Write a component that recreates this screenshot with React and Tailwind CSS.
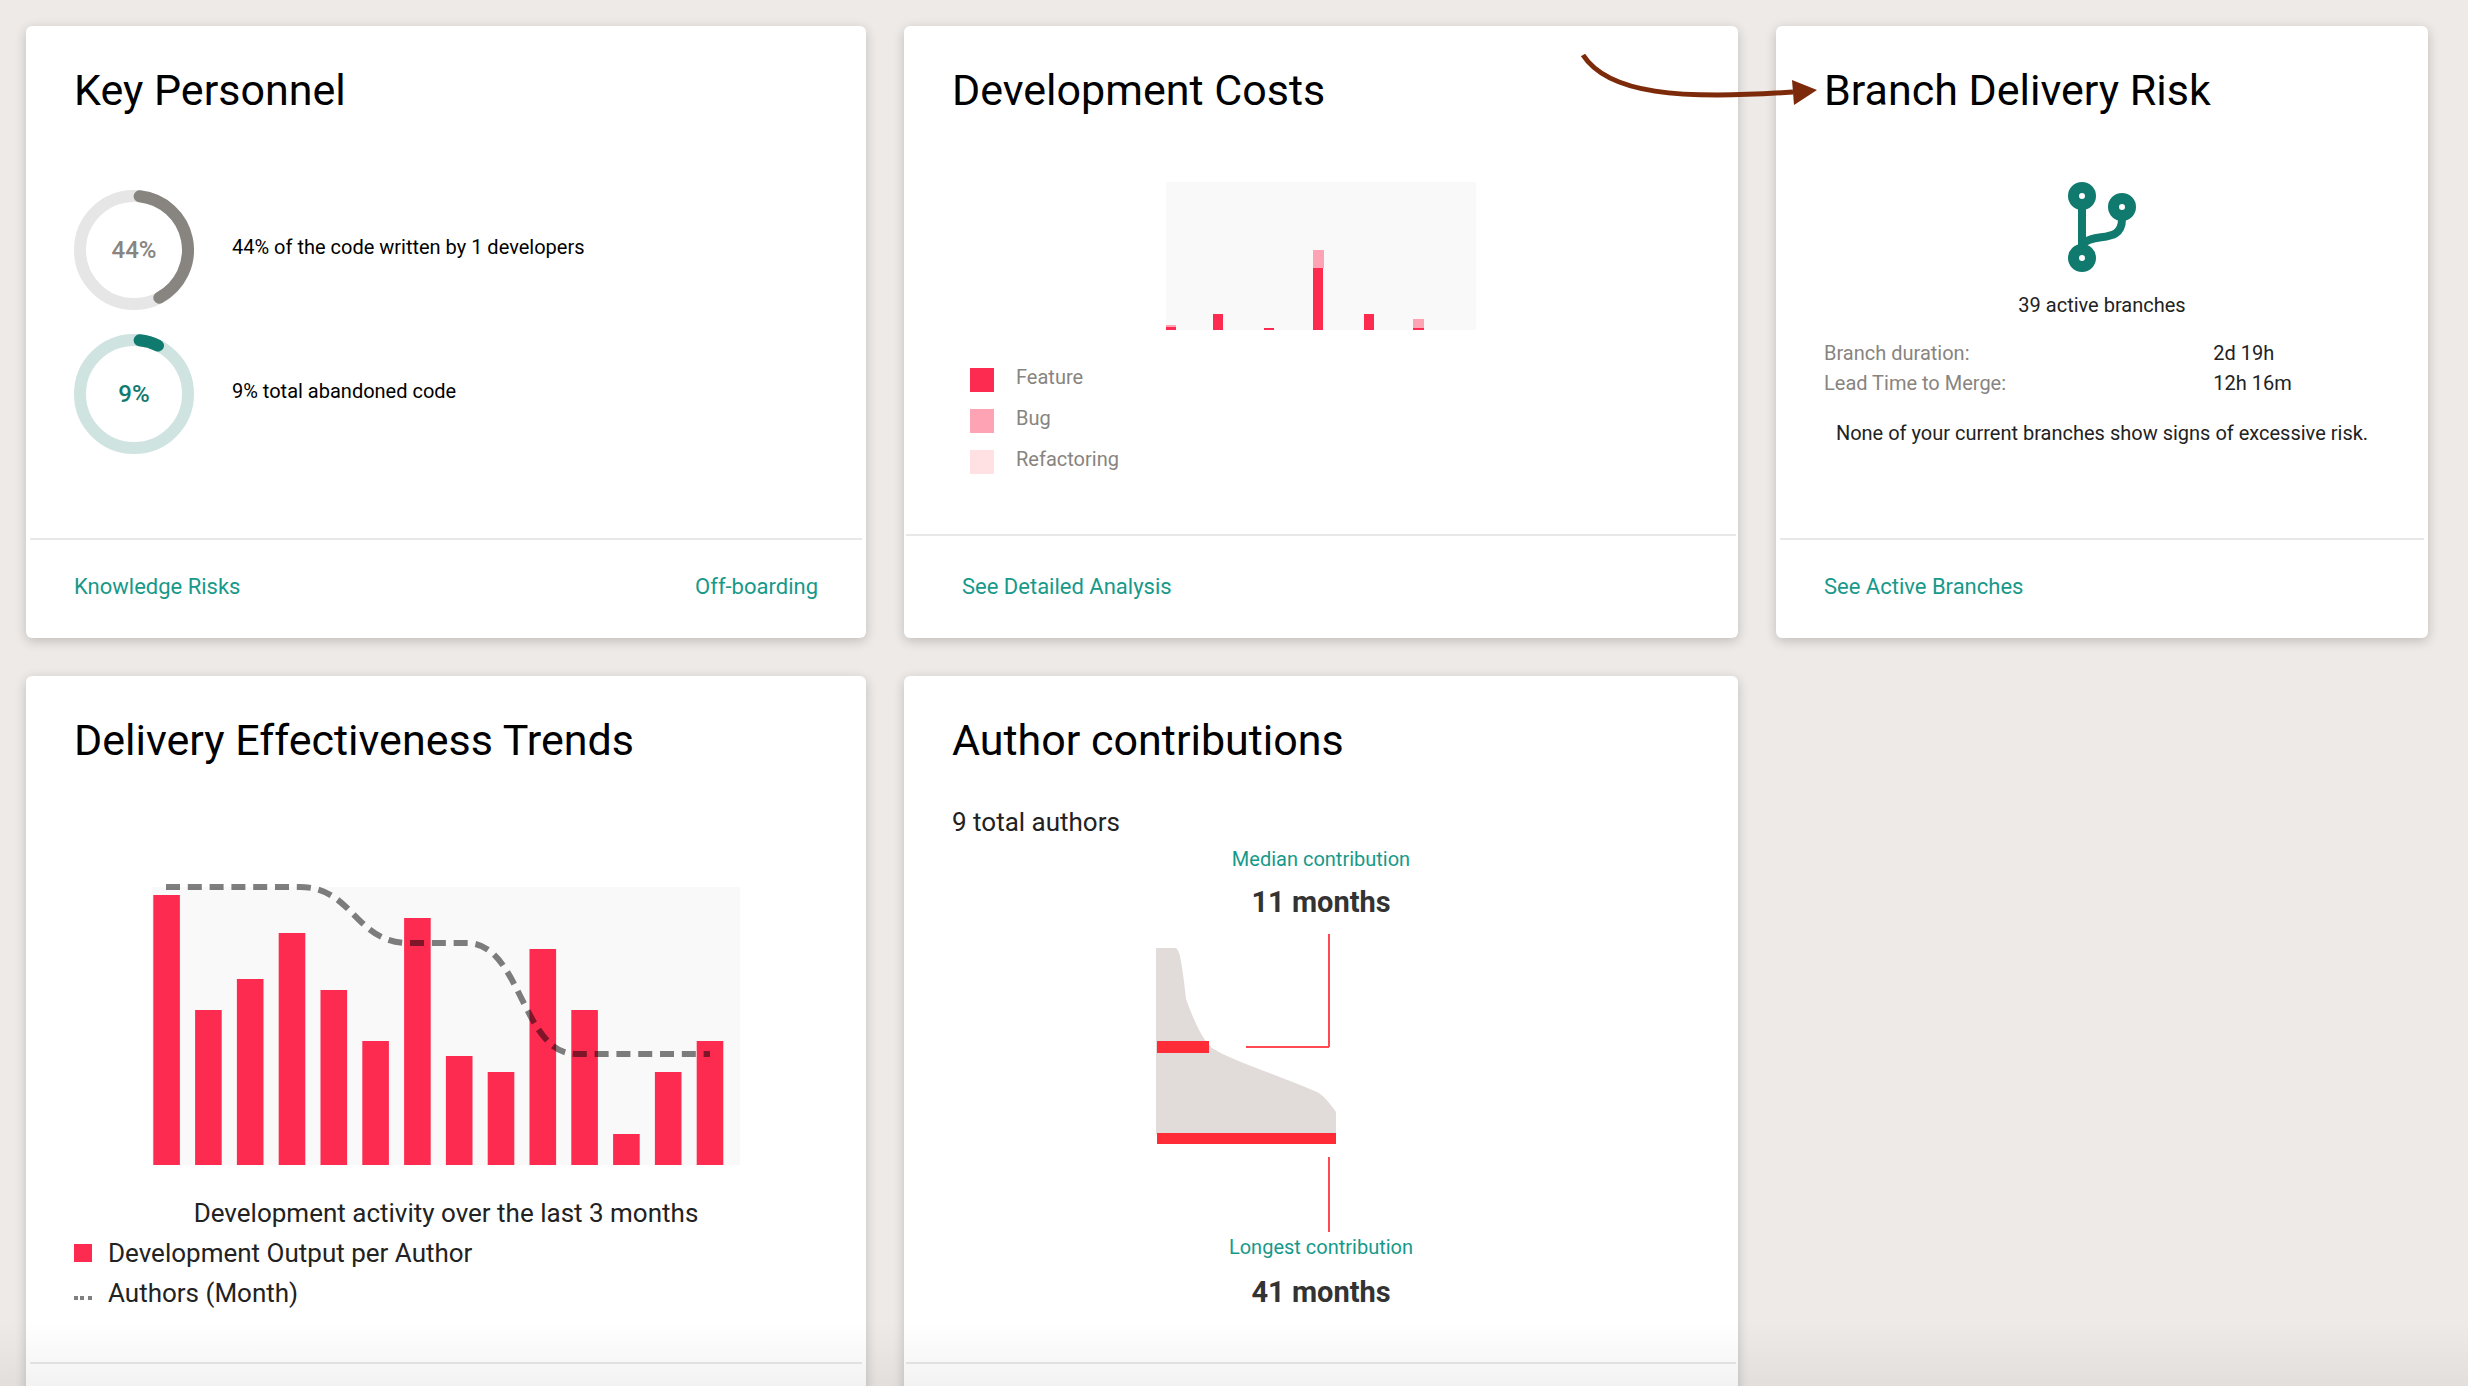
const linkClass = 'text-[22px] leading-8 text-[#17998a] hover:underline';

function Card({ title, footer, footerClass = 'mx-1 h-[100px] px-11 pb-1', overlay, children }) {
  return (
    <section className="relative flex min-h-[612px] min-w-0 flex-col rounded-md bg-white pt-10 shadow-[0_3px_12px_rgba(0,0,0,0.2)]">
      <h2 className="px-12 text-[43px] leading-12 whitespace-nowrap text-black">{title}</h2>
      <div className="px-12">{children}</div>
      <footer className={`mt-auto flex items-center justify-between border-t-2 border-[#e8e8e8] ${footerClass}`}>
        {footer}
      </footer>
      {overlay}
    </section>
  );
}

function Ring({ value, label, color, track, arc }) {
  return (
    <li className="flex items-center gap-[38px]">
      <div className="grid size-[120px] place-items-center">
        <svg viewBox="0 0 120 120" className="col-start-1 row-start-1 size-[120px]" fill="none" strokeWidth="12">
          <circle cx="60" cy="60" r="54" stroke={track} />
          <path d={arc} stroke={color} strokeLinecap="round" />
        </svg>
        <span className="col-start-1 row-start-1 text-2xl font-medium" style={{ color }}>{value}</span>
      </div>
      <span className="pb-1.5 text-xl text-black">{label}</span>
    </li>
  );
}

function CostChart() {
  return (
    <svg viewBox="0 0 310 148" className="h-[148px] w-[310px]" role="img" aria-label="Development costs by type">
      <rect width="310" height="148" fill="#f9f9f9" />
      <g fill="#fda3b4">
        <rect x="0" y="143" width="10" height="2" />
        <rect x="147" y="68" width="11" height="18" />
        <rect x="247" y="137" width="11" height="9" />
      </g>
      <g fill="#fd2b50">
        <rect x="0" y="145" width="10" height="3" />
        <rect x="47" y="132" width="10" height="16" />
        <rect x="98" y="146" width="10" height="2" />
        <rect x="147" y="86" width="10" height="62" />
        <rect x="198" y="132" width="10" height="16" />
        <rect x="247" y="146" width="11" height="2" />
      </g>
    </svg>
  );
}

const outputs = [270, 155, 186, 232, 175, 124, 247, 109, 93, 216, 155, 31, 93, 124];

function TrendChart() {
  return (
    <svg viewBox="0 0 588 281" className="h-[281px] w-[588px]" role="img" aria-label="Development output per author and authors per month">
      <rect y="3" width="588" height="278" fill="#f9f9f9" />
      {outputs.map((h, i) => (
        <rect key={i} x={1.3 + i * 41.8} y={281 - h} width="26.6" height={h} fill="#fd2b50" />
      ))}
      <path
        d="M14 3H148C201 3 203 59 257 59H315C369 59 370 170 424 170H558"
        fill="none"
        stroke="#000"
        strokeOpacity="0.5"
        strokeWidth="6"
        strokeDasharray="14 7.8"
      />
    </svg>
  );
}

function ContributionChart() {
  return (
    <svg viewBox="0 0 330 298" className="h-[298px] w-[330px]" role="img" aria-label="Contribution length of authors">
      <path
        d="M0 14H20Q22 15 24 22C27 38 29 55 30 65Q40 93 49 106L56 114C76 127 120 140 161 158Q168 161 180 178V200H0Z"
        fill="#e1dcd9"
      />
      <rect x="1" y="107" width="52" height="12" fill="#ff2c37" />
      <rect x="1" y="199" width="179" height="11" fill="#ff2c37" />
      <path d="M173 0V113M90 113H173M173 223V298" stroke="#ff4a53" strokeWidth="2" fill="none" />
    </svg>
  );
}

function BranchIcon() {
  return (
    <svg viewBox="0 0 68 90" className="h-[90px] w-[68px]" fill="none" stroke="#107a6e" aria-hidden="true">
      <path d="M14 26V66" strokeWidth="8" />
      <path d="M54 37C54 62 27 50 14 62" strokeWidth="8" />
      <g strokeWidth="11">
        <circle cx="14" cy="14" r="8.5" />
        <circle cx="54" cy="25" r="8.5" />
        <circle cx="14" cy="76" r="8.5" />
      </g>
    </svg>
  );
}

function PointerArrow() {
  return (
    <svg viewBox="0 0 240 60" className="pointer-events-none absolute top-6 -left-[196px] h-[60px] w-[240px]" aria-hidden="true">
      <path d="M3 5C28 44 100 50 213 42" fill="none" stroke="#7c2a0a" strokeWidth="5" />
      <path d="M212 30L237 40L214 55Z" fill="#7c2a0a" />
    </svg>
  );
}

const costTypes = [
  ['Feature', 'bg-[#fd2b50]'],
  ['Bug', 'bg-[#fda3b4]'],
  ['Refactoring', 'bg-[#ffe0e3]'],
];

export default function App() {
  return (
    <main className="relative h-screen overflow-hidden bg-[#eeeae7] pt-[26px] pr-10 pl-[26px] font-['Roboto','Liberation_Sans',sans-serif] text-[#222]">
      <div className="grid grid-cols-[840fr_834fr_652fr] gap-[38px]">
        <Card
          title="Key Personnel"
          footer={
            <>
              <a href="#knowledge-risks" className={linkClass}>Knowledge Risks</a>
              <a href="#off-boarding" className={linkClass}>Off-boarding</a>
            </>
          }
        >
          <ul className="mt-19 flex flex-col gap-6">
            <Ring value="44%" label="44% of the code written by 1 developers" color="#888480" track="#e6e6e6" arc="M65.6 6.3A54 54 0 0 1 85.3 107.7" />
            <Ring value="9%" label="9% total abandoned code" color="#107a6e" track="#cfe3e1" arc="M65.6 6.3A54 54 0 0 1 84 11.6" />
          </ul>
        </Card>

        <Card
          title="Development Costs"
          footerClass="mx-0.5 h-[104px] px-14"
          footer={<a href="#analysis" className={linkClass}>See Detailed Analysis</a>}
        >
          <div className="mt-17 flex justify-center">
            <CostChart />
          </div>
          <ul className="mt-[38px] flex flex-col gap-[17px] pl-[18px]">
            {costTypes.map(([name, swatch]) => (
              <li key={name} className="flex h-6 items-center gap-[22px]">
                <span className={`size-6 ${swatch}`} />
                <span className="pb-1.5 text-xl text-[#888480]">{name}</span>
              </li>
            ))}
          </ul>
        </Card>

        <Card
          title="Branch Delivery Risk"
          footer={<a href="#branches" className={linkClass}>See Active Branches</a>}
          overlay={<PointerArrow />}
        >
          <div className="mt-17 flex flex-col items-center gap-[18px] text-xl leading-[30px]">
            <BranchIcon />
            <p>39 active branches</p>
            <dl className="grid w-full grid-cols-[7fr_3fr]">
              <dt className="text-[#888480]">Branch duration:</dt>
              <dd>2d 19h</dd>
              <dt className="text-[#888480]">Lead Time to Merge:</dt>
              <dd>12h 16m</dd>
            </dl>
            <p className="pt-0.5 whitespace-nowrap">None of your current branches show signs of excessive risk.</p>
          </div>
        </Card>

        <Card title="Delivery Effectiveness Trends">
          <div className="mt-30 mb-[49px] text-[26px] leading-10">
            <figure className="flex flex-col items-center gap-7">
              <TrendChart />
              <figcaption>Development activity over the last 3 months</figcaption>
            </figure>
            <ul>
              <li className="flex items-center gap-4">
                <span className="size-[18px] bg-[#fd2b50]" />
                Development Output per Author
              </li>
              <li className="flex items-center gap-4">
                <svg viewBox="0 0 18 18" className="size-[18px]" fill="#808080" aria-hidden="true">
                  <path d="M0 12h4v4h-4zM6 12h4v4h-4zM14 12h4v4h-4z" />
                </svg>
                Authors (Month)
              </li>
            </ul>
          </div>
        </Card>

        <Card title="Author contributions" footerClass="mx-0.5 h-[100px] px-14">
          <p className="mt-[38px] text-[26px] leading-10">9 total authors</p>
          <div className="mt-0.5 mb-[49px] flex flex-col items-center">
            <a href="#median" className="text-xl leading-[30px] text-[#17998a]">Median contribution</a>
            <strong className="mt-2 mb-3 text-[29px] leading-10 font-bold text-[#333]">11 months</strong>
            <ContributionChart />
            <a href="#longest" className="text-xl leading-[30px] text-[#17998a]">Longest contribution</a>
            <strong className="mt-2.5 text-[29px] leading-10 font-bold text-[#333]">41 months</strong>
          </div>
        </Card>
      </div>
      <div className="pointer-events-none absolute inset-x-0 bottom-0 h-16 bg-linear-to-t from-black/5 to-transparent" />
    </main>
  );
}
